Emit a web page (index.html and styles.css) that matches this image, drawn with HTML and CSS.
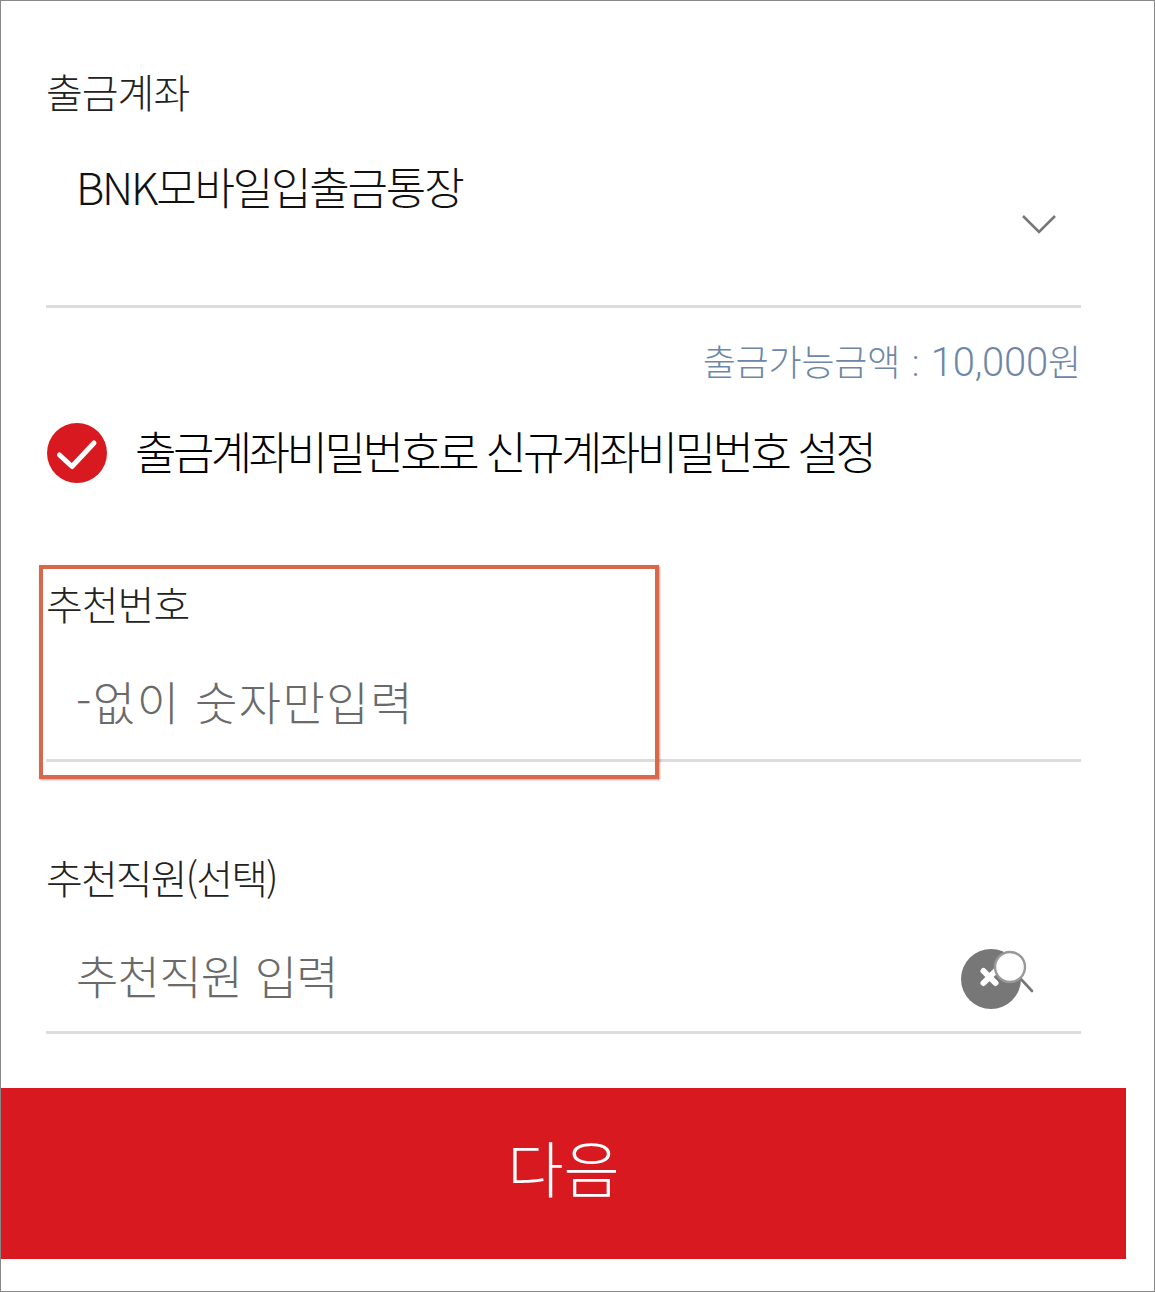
FILE: index.html
```html
<!DOCTYPE html>
<html lang="ko">
<head>
    <meta charset="UTF-8">
    <title>출금계좌</title>
    <link rel="stylesheet" href="styles.css">
</head>
<body>
<div class="frame">
    <form class="form" action="javascript:void(0)">
        <section class="field field_account">
            <div class="field_label">출금계좌</div>
            <div class="field_input select_input">
                <span class="value">BNK모바일입출금통장</span>
                <svg class="chevron" width="36" height="22" viewBox="0 0 36 22">
                    <path d="M2 2 L18 18 L34 2" fill="none" stroke="#777" stroke-width="2.6"/>
                </svg>
            </div>
        </section>
        <p class="balance">출금가능금액 : <span class="balance_amount">10,000</span>원</p>
        <label class="check_row">
            <svg class="check_icon" width="60" height="60" viewBox="0 0 60 60">
                <circle cx="30" cy="30" r="30" fill="#d81920"/>
                <path d="M12.5 32 L25 43.5 L47 20" fill="none" stroke="#fff" stroke-width="5" stroke-linecap="round" stroke-linejoin="round"/>
            </svg>
            <span class="check_text">출금계좌비밀번호로 신규계좌비밀번호 설정</span>
        </label>
        <section class="field field_code">
            <div class="field_label">추천번호</div>
            <div class="field_input">
                <span class="placeholder">-없이 숫자만입력</span>
            </div>
            <div class="highlight"></div>
        </section>
        <section class="field field_staff">
            <div class="field_label">추천직원(선택)</div>
            <div class="field_input search_input">
                <span class="placeholder">추천직원 입력</span>
                <svg class="search_icon" width="74" height="62" viewBox="0 0 74 62">
                    <circle cx="30" cy="31" r="30" fill="#777"/>
                    <path d="M22.5 23 L34.5 35 M34.5 23 L22.5 35" stroke="#fff" stroke-width="6" stroke-linecap="round"/>
                    <path d="M58 29 L71 43" stroke="#777" stroke-width="2.6" stroke-linecap="round"/>
                    <circle cx="49" cy="19" r="15" fill="#fff" stroke="#999" stroke-width="2.4"/>
                </svg>
            </div>
        </section>
    </form>
    <button class="next_button" type="button">다음</button>
</div>
</body>
</html>
```

FILE: styles.css
```css
html, body {
    margin: 0;
    padding: 0;
}
body {
    font-family: "Noto Sans CJK KR", "Noto Sans", sans-serif;
    font-weight: 300;
    background: #fff;
    color: #111;
}
.frame {
    box-sizing: border-box;
    width: 1155px;
    height: 1292px;
    border: 1px solid #888;
    background: #fff;
}
.form {
    padding: 0 73px 0 45px;
}
.field {
    position: relative;
}
.field_label {
    height: 50px;
    font-size: 40px;
    line-height: 50px;
    letter-spacing: -1px;
    color: #222;
}
.field_staff .field_label {
    letter-spacing: -1.9px;
}
.field_input {
    display: flex;
    justify-content: space-between;
    box-sizing: border-box;
    padding-left: 30px;
    border-bottom: 3px solid #ddd;
}
.field_account {
    padding-top: 65px;
}
.select_input {
    height: 192px;
    padding-top: 42px;
}
.value {
    font-size: 44px;
    line-height: 56px;
    letter-spacing: -2.2px;
    color: #111;
}
.chevron {
    margin: 56px 24px 0 0;
}
.balance {
    margin: 0;
    padding-top: 30px;
    height: 50px;
    font-family: Roboto, "Noto Sans CJK KR", sans-serif;
    font-size: 36px;
    line-height: 50px;
    letter-spacing: -0.2px;
    word-spacing: 3px;
    text-align: right;
    color: #6e87a8;
}
.balance_amount {
    font-size: 40px;
}
.check_row {
    display: flex;
    align-items: center;
    gap: 28px;
    height: 60px;
    margin-top: 35px;
    padding-left: 1px;
}
.check_text {
    padding-bottom: 4px;
    font-size: 45px;
    line-height: 60px;
    letter-spacing: -3.5px;
    color: #000;
}
.check_icon {
    flex: none;
}
.field_code {
    margin-top: 95px;
}
.field_code .field_input {
    height: 134px;
    padding-top: 42px;
}
.field_code .placeholder {
    letter-spacing: 1.5px;
}
.field_staff {
    margin-top: 90px;
}
.search_input {
    height: 132px;
    padding-top: 42px;
}
.search_input .placeholder {
    letter-spacing: -0.7px;
}
.placeholder {
    font-size: 46px;
    line-height: 60px;
    color: #6a6a6a;
}
.search_icon {
    margin: 4px 46px 0 0;
}
.highlight {
    position: absolute;
    left: -7px;
    top: -13px;
    width: 612px;
    height: 206px;
    border: 4px solid #d9674a;
    box-shadow: 1px 1px 2px rgba(0, 0, 0, 0.35);
}
.next_button {
    display: block;
    width: 1125px;
    height: 171px;
    margin-top: 54px;
    padding: 0 0 14px;
    border: none;
    background: #d81920;
    color: #fff;
    font-family: inherit;
    font-weight: 300;
    font-size: 61px;
    line-height: 90px;
    text-align: center;
}
```
